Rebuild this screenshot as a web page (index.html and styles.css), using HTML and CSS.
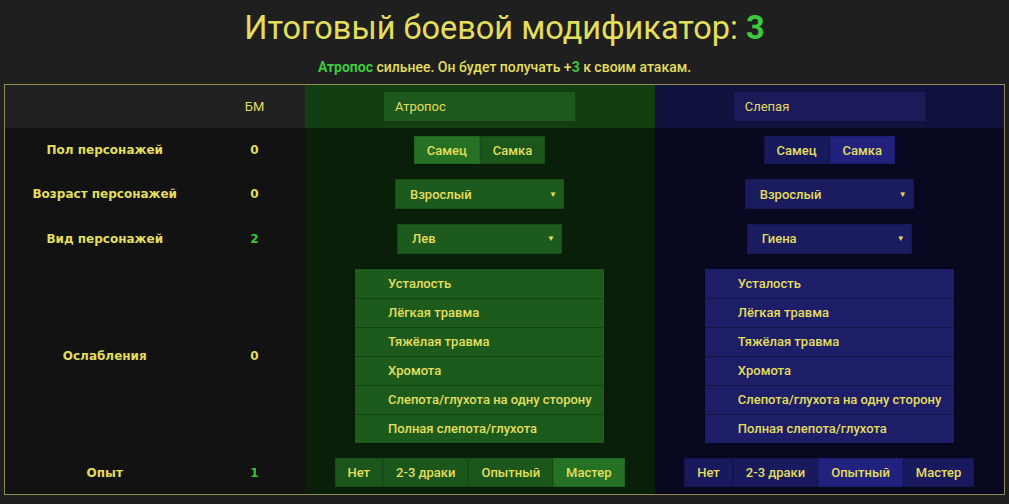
FILE: index.html
```html
<!DOCTYPE html>
<html lang="ru">
<head>
<meta charset="utf-8">
<title>Боевой модификатор</title>
<link rel="stylesheet" href="styles.css">
</head>
<body>
<h1 class="title">Итоговый боевой модификатор: <span class="total">3</span></h1>
<p class="summary"><span class="hl">Атропос</span> сильнее. Он будет получать +<span class="hl">3</span> к своим атакам.</p>
<table class="calc">
  <colgroup><col class="c-label"><col class="c-bm"><col class="c-side"><col class="c-side"></colgroup>
  <tr class="head">
    <th></th>
    <th class="bm-h">БМ</th>
    <th class="green"><input class="name" value="Атропос"></th>
    <th class="blue"><input class="name" value="Слепая"></th>
  </tr>
  <tr class="r-44">
    <td class="label">Пол персонажей</td>
    <td class="bm">0</td>
    <td class="green"><div class="seg"><button class="on">Самец</button><button>Самка</button></div></td>
    <td class="blue"><div class="seg"><button>Самец</button><button class="on">Самка</button></div></td>
  </tr>
  <tr class="r-44">
    <td class="label">Возраст персонажей</td>
    <td class="bm">0</td>
    <td class="green"><div class="sel w-age"><span>Взрослый</span><span class="arr">▼</span></div></td>
    <td class="blue"><div class="sel w-age"><span>Взрослый</span><span class="arr">▼</span></div></td>
  </tr>
  <tr class="r-45">
    <td class="label">Вид персонажей</td>
    <td class="bm pos">2</td>
    <td class="green"><div class="sel w-kind"><span>Лев</span><span class="arr">▼</span></div></td>
    <td class="blue"><div class="sel w-kind"><span>Гиена</span><span class="arr">▼</span></div></td>
  </tr>
  <tr class="r-190">
    <td class="label">Ослабления</td>
    <td class="bm">0</td>
    <td class="green">
      <ul class="list">
        <li>Усталость</li><li>Лёгкая травма</li><li>Тяжёлая травма</li><li>Хромота</li><li>Слепота/глухота на одну сторону</li><li>Полная слепота/глухота</li>
      </ul>
    </td>
    <td class="blue">
      <ul class="list">
        <li>Усталость</li><li>Лёгкая травма</li><li>Тяжёлая травма</li><li>Хромота</li><li>Слепота/глухота на одну сторону</li><li>Полная слепота/глухота</li>
      </ul>
    </td>
  </tr>
  <tr class="r-43">
    <td class="label">Опыт</td>
    <td class="bm pos">1</td>
    <td class="green"><div class="seg exp"><button>Нет</button><button>2-3 драки</button><button>Опытный</button><button class="on">Мастер</button></div></td>
    <td class="blue"><div class="seg exp"><button>Нет</button><button>2-3 драки</button><button class="on">Опытный</button><button>Мастер</button></div></td>
  </tr>
</table>
</body>
</html>
```

FILE: styles.css
```css
html, body {
  margin: 0;
  background: #1f1f1f;
  color: #e2de5e;
  font-family: Roboto, "Liberation Sans", sans-serif;
}

.title {
  margin: 0;
  padding-top: 8px;
  text-align: center;
  font-size: 32.5px;
  font-weight: 400;
  line-height: 40px;
  color: #e3df5c;
}
.total { color: #3cc93c; font-weight: 700; }

.summary {
  margin: 12px 0 9px;
  text-align: center;
  font-size: 14px;
  font-weight: 500;
  line-height: 15px;
}
.hl { color: #3cc93c; font-weight: 700; }

.calc {
  margin: 0 4px;
  width: 1001px;
  border-collapse: collapse;
  border: 1px solid #8e8c52;
  table-layout: fixed;
}
.c-label { width: 200px; }
.c-bm { width: 100px; }
.c-side { width: 350px; }

.calc th, .calc td {
  padding: 0;
  text-align: center;
  vertical-align: middle;
  background: #121212;
}
.head th { height: 43px; background: #212121; font-weight: 400; font-size: 13px; }
.head th.green { background: #123e12; }
.head th.blue { background: #11113e; }
.calc td.green { background: #0a1f0a; }
.calc td.blue { background: #080820; }

.r-44 td { height: 44px; }
.r-45 td { height: 45px; }
.r-190 td { height: 190px; }
.r-43 td { height: 43px; }

.label, .bm {
  font-family: "DejaVu Sans", Verdana, sans-serif;
  font-weight: 700;
  font-size: 12px;
}
.bm { font-size: 12px; }
.bm.pos { color: #3cc43c; }

.name {
  box-sizing: border-box;
  width: 191px;
  height: 29px;
  border: 0;
  padding: 0 11px;
  margin: 0;
  font: 400 13px Roboto, sans-serif;
  color: #e2de5e;
  outline: none;
  display: block;
  margin-left: auto;
  margin-right: auto;
}
.green .name { background: #1d581d; }
.blue .name { background: #1b1b5a; }

.seg {
  display: inline-flex;
  vertical-align: middle;
}
.seg button {
  height: 28px;
  border: 0;
  margin: 0;
  padding: 0 13px;
  font: 500 13px Roboto, sans-serif;
  color: #e2de5e;
  cursor: pointer;
  box-shadow: inset 0 0 0 1px rgba(0,0,0,0.12);
}
.seg.exp button { height: 29px; padding: 0 13px; }
.green .seg button { background: #1b561b; }
.green .seg button.on { background: #257225; }
.blue .seg button { background: #19195e; }
.blue .seg button.on { background: #22227e; }

.sel {
  box-sizing: border-box;
  display: flex;
  align-items: center;
  justify-content: space-between;
  height: 30px;
  margin: 0 auto;
  padding: 0 7px 0 15px;
  font: 500 13px Roboto, sans-serif;
  box-shadow: inset 0 0 0 1px rgba(0,0,0,0.15);
}
.w-age { width: 169px; }
.w-kind { width: 165px; }
.arr { font-size: 8px; }
.green .sel { background: #1d5a1d; }
.blue .sel { background: #1b1b60; }

.list {
  list-style: none;
  margin: 0 auto;
  padding: 0;
  width: 249px;
  text-align: left;
  box-shadow: 0 0 2px rgba(0,0,0,0.5);
}
.list li {
  box-sizing: border-box;
  height: 29px;
  padding-left: 33px;
  font: 500 13px/28px Roboto, sans-serif;
  border-top: 1px solid transparent;
}
.green .list li { background: #1d5b1d; border-top-color: #164316; }
.blue .list li { background: #1d1d68; border-top-color: #15154a; }
.green .list li:first-child { border-top-color: #1d5b1d; }
.blue .list li:first-child { border-top-color: #1d1d68; }
```
